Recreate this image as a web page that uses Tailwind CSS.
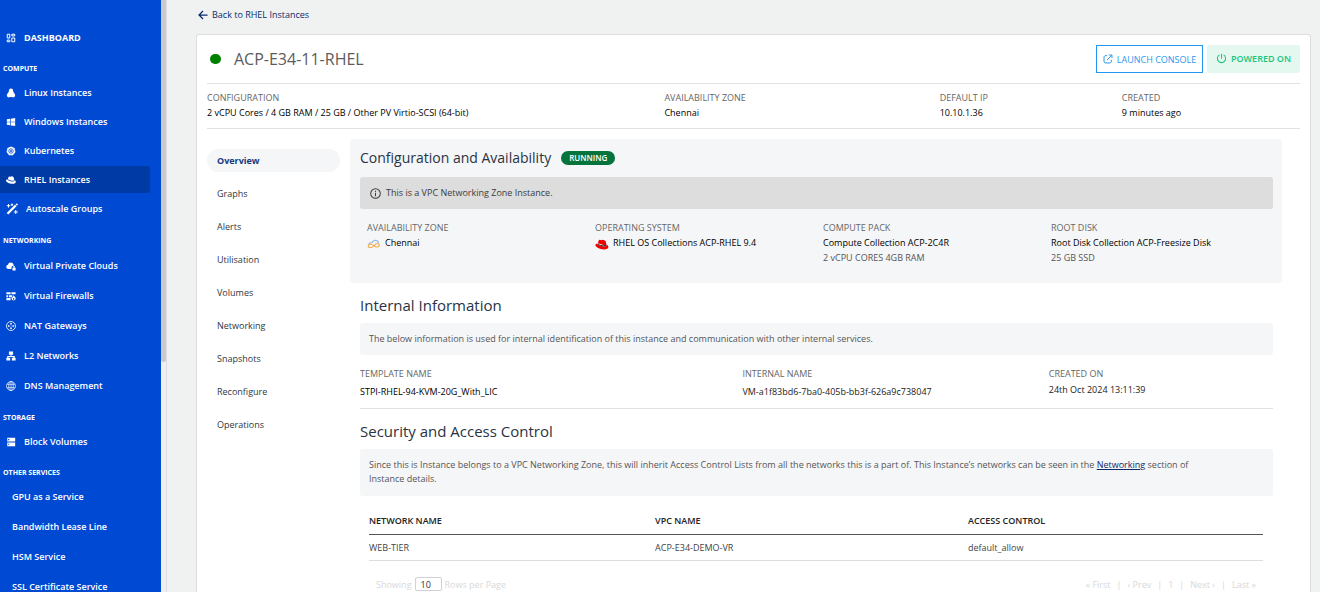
<!DOCTYPE html>
<html lang="en">
<head>
<meta charset="utf-8">
<meta name="viewport" content="width=device-width, initial-scale=1">
<title>ACP-E34-11-RHEL</title>
<script src="https://cdn.jsdelivr.net/npm/@tailwindcss/browser@4"></script>
</head>
<body class="flex h-screen overflow-hidden bg-[#f0f2f2] font-['Open_Sans','Noto_Sans',sans-serif] text-[9px] leading-[15px] text-black">

<!-- Sidebar -->
<nav aria-label="Main" class="flex w-[161px] shrink-0 flex-col overflow-hidden bg-[#004ad3] pt-6 font-semibold text-white">
  <a href="#" class="flex h-[27px] shrink-0 items-center gap-2 pl-[6px] font-bold">
    <svg class="size-[10px]" viewBox="0 0 24 24" fill="none" stroke="currentColor" stroke-width="2.4"><path d="M3 3h6v9H3zM14 3h7v4h-7zM14 12h7v9h-7zM3 17h6v4H3z"/></svg>
    DASHBOARD
  </a>

  <h2 class="mt-[11px] h-[14px] shrink-0 pl-[3px] text-[7px] leading-[14px] font-bold">COMPUTE</h2>
  <ul class="mt-[3px] flex shrink-0 flex-col gap-[2px]">
    <li><a href="#" class="flex h-[27px] items-center gap-2 pl-[6px]">
      <svg class="size-[10px]" viewBox="0 0 24 24" fill="currentColor"><path d="M12 1C9 1 7 3.200 7 6c0 2-.3 3-1.500 4.500C3.500 12.500 2 15 2 18c0 2.500 2.500 4.500 5 4.500 1 0 1.800-.5 2.300-1h5.400c.5.500 1.300 1 2.300 1 2.500 0 5-2 5-4.500 0-3-1.500-5.500-3.500-7.500C17.300 9 17 8 17 6c0-2.800-2-5-5-5z"/></svg>
      Linux Instances</a></li>
    <li><a href="#" class="flex h-[27px] items-center gap-2 pl-[6px]">
      <svg class="size-[10px]" viewBox="0 0 24 24" fill="currentColor"><path d="M2 5.500l8-1.300V11.300H2zM11.500 4L22 2.300v9H11.500zM2 12.700h8v7.200L2 18.600zM11.500 12.700H22v9l-10.500-1.600z"/></svg>
      Windows Instances</a></li>
    <li><a href="#" class="flex h-[27px] items-center gap-2 pl-[6px]">
      <svg class="size-[10px]" viewBox="0 0 24 24"><path d="M12 1l8.500 4 2.200 9.300-6 7.700H7.300l-6-7.700L3.500 5z" fill="#fff"/><g fill="none" stroke="#004ad3" stroke-width="1.100"><circle cx="12" cy="12" r="5.500"/><path d="M12 4v16M4 12h16M6.500 6.500l11 11M17.500 6.500l-11 11"/></g></svg>
      Kubernetes</a></li>
    <li class="pr-[11px]"><a href="#" aria-current="page" class="flex h-[27px] items-center gap-2 rounded-r-[3px] bg-[#003aa5] pl-[6px]">
      <svg class="size-[10px]" viewBox="0 0 24 24" fill="currentColor"><path d="M16 13.500c1.600 0 3.800-.3 3.800-2.200 0-.5-1-4.600-1.300-5.500-.3-.9-3.800-2.600-5-2.600-1 0-1.400 1.200-2.600 1.200-1.100 0-2-.9-3-.9s-1.700.7-2.200 2.100L4.500 9.500C4.500 11 9.700 13.500 16 13.500zM20.500 12c.2 1.200-.3 3.500-4.500 3.500-5.500 0-12.500-2.800-12.600-5.300C1.500 10.500 0 11.500 0 13c0 3.500 8 8 15.500 8 5.500 0 8-2 8-4.500 0-1.700-1.200-3.300-3-4.500z"/></svg>
      RHEL Instances</a></li>
    <li><a href="#" class="flex h-[27px] items-center gap-2 pl-[6px]">
      <svg class="size-[12px]" viewBox="0 0 24 24" fill="none" stroke="currentColor"><path d="M3 21.500L19.500 5" stroke-width="4.600"/><path d="M5 2v7M1.500 5.500h7M12 1v5M9.500 3.500h5M19.500 14v8M15.500 18h8M21.500 1v4M19.500 3h4" stroke-width="2"/></svg>
      Autoscale Groups</a></li>
  </ul>

  <h2 class="mt-[12px] h-[14px] shrink-0 pl-[3px] text-[7px] leading-[14px] font-bold">NETWORKING</h2>
  <ul class="mt-1 flex shrink-0 flex-col gap-[3px]">
    <li><a href="#" class="flex h-[27px] items-center gap-2 pl-[6px]">
      <svg class="size-[10px]" viewBox="0 0 24 24" fill="currentColor"><path d="M13 19H5.500A5 5 0 0 1 4.600 9.100 7 7 0 0 1 18 8.500c.5.900.7 1.700.8 2.800A5.300 5.300 0 0 0 13 16z"/><path d="M16.800 16v-1.500a2.500 2.500 0 0 1 5 0V16H23v7h-7.500v-7zm1.500 0h2v-1.500a1 1 0 0 0-2 0z"/></svg>
      Virtual Private Clouds</a></li>
    <li><a href="#" class="flex h-[27px] items-center gap-2 pl-[6px]">
      <svg class="size-[10px]" viewBox="0 0 24 24" fill="currentColor"><path d="M1 3h10v5H1zM13 3h10v5H13zM1 10h4v5H1zM7 10h8v5H7zM1 17h10v5H1z"/><path fill-rule="evenodd" d="M18 9.500c0 3 5.500 4 5.500 8.700a5.200 5.200 0 0 1-10.300 0c0-2 1-3.500 2.300-4.200 0 1 .3 1.500 1 2 .8-2 .3-4.500 1.500-6.500zM18.500 16c-1 1.200-2 1.800-2 3a2 2 0 0 0 4 0c0-1.200-1-1.800-2-3z"/></svg>
      Virtual Firewalls</a></li>
    <li><a href="#" class="flex h-[27px] items-center gap-2 pl-[6px]">
      <svg class="size-[10px]" viewBox="0 0 24 24" fill="none" stroke="currentColor" stroke-width="2"><circle cx="12" cy="12" r="10.800"/><path d="M12 5v5M12 14v5M5 12h5M14 12h5"/><path d="M12 4l2.500 3h-5zM12 20l2.500-3h-5zM4 12l3-2.500v5zM20 12l-3-2.500v5z" fill="currentColor" stroke="none"/></svg>
      NAT Gateways</a></li>
    <li><a href="#" class="flex h-[27px] items-center gap-2 pl-[6px]">
      <svg class="size-[10px]" viewBox="0 0 24 24" fill="currentColor"><path d="M7 1h10v8h-4v3h8v4h2v7h-9v-7h4v-1.500H6V16h4v7H1v-7h2v-4h8V9H7z"/></svg>
      L2 Networks</a></li>
    <li><a href="#" class="flex h-[27px] items-center gap-2 pl-[6px]">
      <svg class="size-[10px]" viewBox="0 0 24 24" fill="none" stroke="currentColor" stroke-width="1.600"><circle cx="12" cy="12" r="10.800"/><ellipse cx="12" cy="12" rx="5.500" ry="10.800"/><path d="M12 1.500v21M2.500 8h19M2.500 16h19"/></svg>
      DNS Management</a></li>
  </ul>

  <h2 class="mt-[12px] h-[14px] shrink-0 pl-[3px] text-[7px] leading-[14px] font-bold">STORAGE</h2>
  <ul class="mt-[3px] flex shrink-0 flex-col">
    <li><a href="#" class="flex h-[27px] items-center gap-2 pl-[6px]">
      <svg class="size-[10px]" viewBox="0 0 24 24" fill="currentColor" fill-rule="evenodd"><path d="M3 2h19v9H3zM5 5v2.500h3V5zM3 13h19v9H3zM5 16v2.500h3V16z"/></svg>
      Block Volumes</a></li>
  </ul>

  <h2 class="mt-[11px] h-[14px] shrink-0 pl-[3px] text-[7px] leading-[14px] font-bold">OTHER SERVICES</h2>
  <ul class="mt-[3px] flex shrink-0 flex-col gap-[3px]">
    <li><a href="#" class="flex h-[27px] items-center pl-3">GPU as a Service</a></li>
    <li><a href="#" class="flex h-[27px] items-center pl-3">Bandwidth Lease Line</a></li>
    <li><a href="#" class="flex h-[27px] items-center pl-3">HSM Service</a></li>
    <li><a href="#" class="flex h-[27px] items-center pl-3">SSL Certificate Service</a></li>
  </ul>
</nav>

<!-- Sidebar scroll track -->
<div aria-hidden="true" class="w-[6px] shrink-0 border-r border-[#dcdee4] bg-[#efeff1]">
  <div class="h-[362px] rounded-b-[3px] bg-[#cacacd]"></div>
</div>

<main class="flex min-w-0 flex-1 flex-col pt-[7px] pr-[9px] pl-[29px]">
  <a href="#" class="flex items-center gap-1 self-start pl-[2px] text-[#0a2a6b]">
    <svg class="size-[10px]" viewBox="0 0 24 24" fill="none" stroke="currentColor" stroke-width="3"><path d="M23 12H3M12 2.500L2.500 12l9.500 9.500"/></svg>
    Back to RHEL Instances
  </a>

  <section class="mt-3 flex-1 rounded-t-[3px] border border-b-0 border-[#dddfdf] bg-white px-[10px]">
    <header class="flex items-start pt-[10px] pb-[10px]">
      <div class="flex h-7 flex-1 items-center gap-[13px] pl-[3px]">
        <span role="img" aria-label="Online" class="h-[10px] w-[11px] rounded-full bg-[#008000]"></span>
        <h1 class="text-[16px] leading-6 font-normal text-[#5c5c5c]">ACP-E34-11-RHEL</h1>
      </div>
      <button type="button" class="flex h-7 w-[107px] items-center justify-center gap-1 border border-[#2196f3] text-[#2b98f0]">
        <svg class="size-[10px]" viewBox="0 0 24 24" fill="none" stroke="currentColor" stroke-width="2.400"><path d="M10 4H5L2.500 6.500V19L5 21.500h12.500L20 19v-5M14 2.500h7.500V10M21 3L9.500 14.500"/></svg>
        LAUNCH CONSOLE
      </button>
      <button type="button" class="ml-1 flex h-7 w-[93px] items-center justify-center gap-1 rounded-[3px] bg-[#e4f8ef] pb-[2px] font-semibold text-[#1bc47d]">
        <svg class="size-[11px]" viewBox="0 0 24 24" fill="none" stroke="currentColor" stroke-width="2.200"><path d="M12 1.500v11M7.500 4.200a9 9 0 1 0 9 0"/></svg>
        POWERED ON
      </button>
    </header>

    <dl class="grid grid-cols-12 border-y border-[#e2e2e2] pt-[6px] pb-2">
      <div class="col-span-5"><dt class="text-[#666]">CONFIGURATION</dt><dd>2 vCPU Cores / 4 GB RAM / 25 GB / Other PV Virtio-SCSI (64-bit)</dd></div>
      <div class="col-span-3 pl-[2px]"><dt class="text-[#666]">AVAILABILITY ZONE</dt><dd>Chennai</dd></div>
      <div class="col-span-2 pl-[4px]"><dt class="text-[#666]">DEFAULT IP</dt><dd>10.10.1.36</dd></div>
      <div class="col-span-2 pl-[4px]"><dt class="text-[#666]">CREATED</dt><dd>9 minutes ago</dd></div>
    </dl>

    <div class="flex gap-[10px] pt-[10px]">
      <ul class="flex w-[133px] shrink-0 flex-col gap-[10px] pt-[10px] text-[#2f3742]">
        <li><a href="#" aria-current="page" class="flex h-[23px] items-center rounded-full bg-[#f5f6f8] pl-[10px] font-bold text-[#153a80]">Overview</a></li>
        <li><a href="#" class="flex h-[23px] items-center pl-[10px]">Graphs</a></li>
        <li><a href="#" class="flex h-[23px] items-center pl-[10px]">Alerts</a></li>
        <li><a href="#" class="flex h-[23px] items-center pl-[10px]">Utilisation</a></li>
        <li><a href="#" class="flex h-[23px] items-center pl-[10px]">Volumes</a></li>
        <li><a href="#" class="flex h-[23px] items-center pl-[10px]">Networking</a></li>
        <li><a href="#" class="flex h-[23px] items-center pl-[10px]">Snapshots</a></li>
        <li><a href="#" class="flex h-[23px] items-center pl-[10px]">Reconfigure</a></li>
        <li><a href="#" class="flex h-[23px] items-center pl-[10px]">Operations</a></li>
      </ul>

      <div class="mr-[18px] min-w-0 flex-1">
        <section class="rounded-[3px] bg-[#f5f6f8] pt-2 pr-[9px] pb-[18px] pl-[10px]">
          <div class="flex items-center gap-[10px]">
            <h2 class="text-[14px] leading-[22px] font-medium text-[#283343]">Configuration and Availability</h2>
            <span class="rounded-full bg-[#04743c] px-2 text-[8px] leading-[14px] font-semibold text-white">RUNNING</span>
          </div>
          <p class="mt-2 flex h-8 items-center gap-[5px] rounded-[3px] bg-[#ddd] px-[10px] pb-[2px] text-[#3c3c3c]">
            <svg class="mt-[2px] size-[11px]" viewBox="0 0 24 24" fill="none" stroke="currentColor" stroke-width="2.200"><circle cx="12" cy="12" r="10.500"/><path d="M12 10.500V18M12 6v2.500"/></svg>
            This is a VPC Networking Zone Instance.
          </p>
          <dl class="-mr-[6px] mt-[11px] grid grid-cols-4 pl-[7px]">
            <div><dt class="text-[#666]">AVAILABILITY ZONE</dt>
              <dd class="flex items-center gap-1">
                <svg class="mt-[3px] h-[10px] w-[14px]" viewBox="0 0 28 20" fill="none" stroke-width="2.400"><path d="M3 11C5 8 7 7 10 7c2-4 6-5 9-4 3 1 4 3 4 5" stroke="#8fb0e8"/><path d="M10 17H5c-4-1-3-6 2-7 5 0 7 6 12 6 7 0 7-7 1-7-5 0-5 8-12 8" stroke="#f2b14c"/></svg>
                Chennai</dd></div>
            <div><dt class="text-[#666]">OPERATING SYSTEM</dt>
              <dd class="flex items-center gap-1">
                <svg class="mt-[3px] h-[11px] w-[14px]" viewBox="0 2 24 20"><path fill="#e00" d="M16 13.500c1.600 0 3.800-.3 3.800-2.200 0-.5-1-4.600-1.300-5.500-.3-.9-3.800-2.600-5-2.600-1 0-1.400 1.200-2.600 1.200-1.100 0-2-.9-3-.9s-1.700.7-2.200 2.100L4.500 9.500zM20.500 12c.2 1.200-.3 3.500-4.500 3.500-5.500 0-12.500-2.800-12.600-5.300C1.500 10.500 0 11.500 0 13c0 3.500 8 8 15.500 8 5.500 0 8-2 8-4.500 0-1.700-1.200-3.300-3-4.500z"/><path fill="#111" d="M4.700 9.500c2 3.500 12 6 15.300 2.500.5 2.200-1 3.300-4 3.300-6 0-12.500-3-11.300-5.800z"/></svg>
                RHEL OS Collections ACP-RHEL 9.4</dd></div>
            <div><dt class="text-[#666]">COMPUTE PACK</dt><dd>Compute Collection ACP-2C4R</dd><dd class="text-[#555]">2 vCPU CORES 4GB RAM</dd></div>
            <div><dt class="text-[#666]">ROOT DISK</dt><dd>Root Disk Collection ACP-Freesize Disk</dd><dd class="text-[#555]">25 GB SSD</dd></div>
          </dl>
        </section>

        <section class="mr-[9px] ml-[10px] border-b border-[#e2e2e2] pt-[11px] pb-[9px]">
          <h2 class="text-[15px] leading-[22px] font-medium text-[#283343]">Internal Information</h2>
          <p class="mt-[7px] rounded-[3px] bg-[#f5f6f8] px-[9px] pt-2 pb-[9px] text-[#555]">The below information is used for internal identification of this instance and communication with other internal services.</p>
          <dl class="mt-[11px] grid grid-cols-12">
            <div class="col-span-5 flex flex-col gap-[3px]"><dt class="text-[#666]">TEMPLATE NAME</dt><dd>STPI-RHEL-94-KVM-20G_With_LIC</dd></div>
            <div class="col-span-4 flex flex-col gap-[3px] pl-[2px]"><dt class="text-[#666]">INTERNAL NAME</dt><dd class="text-[#222]">VM-a1f83bd6-7ba0-405b-bb3f-626a9c738047</dd></div>
            <div class="col-span-3 flex flex-col gap-px pl-1"><dt class="text-[#666]">CREATED ON</dt><dd class="text-[#222]">24th Oct 2024 13:11:39</dd></div>
          </dl>
        </section>

        <section class="mr-[9px] ml-[10px] pt-[11px]">
          <h2 class="text-[15px] leading-[22px] font-medium text-[#283343]">Security and Access Control</h2>
          <p class="mt-[7px] rounded-[3px] bg-[#f5f6f8] pt-[9px] pr-[60px] pb-[10px] pl-[9px] leading-[14px] text-[#555]">Since this is Instance belongs to a VPC Networking Zone, this will inherit Access Control Lists from all the networks this is a part of. This Instance’s networks can be seen in the <a href="#" class="text-[#0a2a6b] underline">Networking</a> section of Instance details.</p>
          <div class="pt-[12px] pr-[10px] pl-[9px]">
            <table class="w-full table-fixed text-left">
              <thead><tr class="h-[26px] border-b border-[#555]">
                <th scope="col" class="w-[32%] font-semibold text-[#222]">NETWORK NAME</th>
                <th scope="col" class="w-[35%] font-semibold text-[#222]">VPC NAME</th>
                <th scope="col" class="font-semibold text-[#222]">ACCESS CONTROL</th>
              </tr></thead>
              <tbody><tr class="h-[26px] border-b border-[#ddd] text-[#444]">
                <td>WEB-TIER</td><td>ACP-E34-DEMO-VR</td><td>default_allow</td>
              </tr></tbody>
            </table>
            <div class="mt-4 flex justify-between px-[7px] font-medium text-[#d8d8d8]">
              <div class="flex items-center gap-[3px]">
                <label for="rows">Showing</label>
                <input id="rows" type="text" value="10" class="h-[14px] w-[27px] rounded-[2px] border border-[#cfd2d8] bg-white pl-[5px] font-normal text-[#333]">
                <span>Rows per Page</span>
              </div>
              <div class="flex items-center gap-[6px]">
                <button type="button">« First</button><span>|</span>
                <button type="button">‹ Prev</button><span>|</span>
                <span>1</span><span>|</span>
                <button type="button">Next ›</button><span>|</span>
                <button type="button">Last »</button>
              </div>
            </div>
          </div>
        </section>
      </div>
    </div>
  </section>
</main>
</body>
</html>
